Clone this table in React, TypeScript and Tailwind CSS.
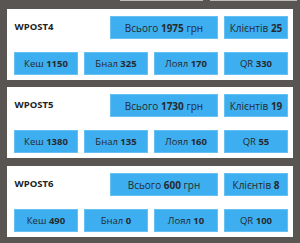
import React from "react";

type Row = { name: string; total: number; clients: number; cash: number; bnal: number; loyal: number; qr: number };

const rows: Row[] = [
  { name: "WPOST4", total: 1975, clients: 25, cash: 1150, bnal: 325, loyal: 170, qr: 330 },
  { name: "WPOST5", total: 1730, clients: 19, cash: 1380, bnal: 135, loyal: 160, qr: 55 },
  { name: "WPOST6", total: 600, clients: 8, cash: 490, bnal: 0, loyal: 10, qr: 100 },
];

const btn =
  "flex items-center justify-center bg-[#3daef0] border border-[#66c0f2] text-[#262a2e] leading-none whitespace-nowrap";

function Card({ r, mt }: { r: Row; mt: string }) {
  return (
    <div className={`bg-white h-[71px] pl-[7px] pr-[5px] pt-[7px] flex flex-col ${mt}`}>
      <div className="flex items-center h-[23px] gap-[6px]">
        <div className="flex-1 text-[9.5px] font-bold text-[#222] pl-[0.5px]">{r.name}</div>
        <div className={`${btn} w-[108px] h-[23px] text-[10px]`}>
          Всього&nbsp;<b className="font-bold">{r.total}</b>&nbsp;грн
        </div>
        <div className={`${btn} w-[64px] h-[23px] text-[10px]`}>
          Клієнтів&nbsp;<b className="font-bold">{r.clients}</b>
        </div>
      </div>
      <div className="mt-[13px] grid grid-cols-4 gap-[6px] h-[23px] text-[9.5px]">
        <div className={btn}>
          Кеш&nbsp;<b className="font-bold">{r.cash}</b>
        </div>
        <div className={btn}>
          Бнал&nbsp;<b className="font-bold">{r.bnal}</b>
        </div>
        <div className={btn}>
          Лоял&nbsp;<b className="font-bold">{r.loyal}</b>
        </div>
        <div className={btn}>
          QR&nbsp;<b className="font-bold">{r.qr}</b>
        </div>
      </div>
    </div>
  );
}

export default function App() {
  return (
    <div
      className="relative w-[300px] h-[243px] overflow-hidden bg-[#595553] pt-[9px] px-[7px]"
      style={{ fontFamily: '"Open Sans", "Noto Sans", sans-serif' }}
    >
      <div className="absolute top-0 left-[120px] w-[83px] h-[1px] bg-[#bdbdbd]" />
      <div className="absolute top-0 left-[210px] w-[87px] h-[1px] bg-[#bdbdbd]" />
      <Card r={rows[0]} mt="" />
      <Card r={rows[1]} mt="mt-[7px]" />
      <Card r={rows[2]} mt="mt-[8px]" />
    </div>
  );
}
